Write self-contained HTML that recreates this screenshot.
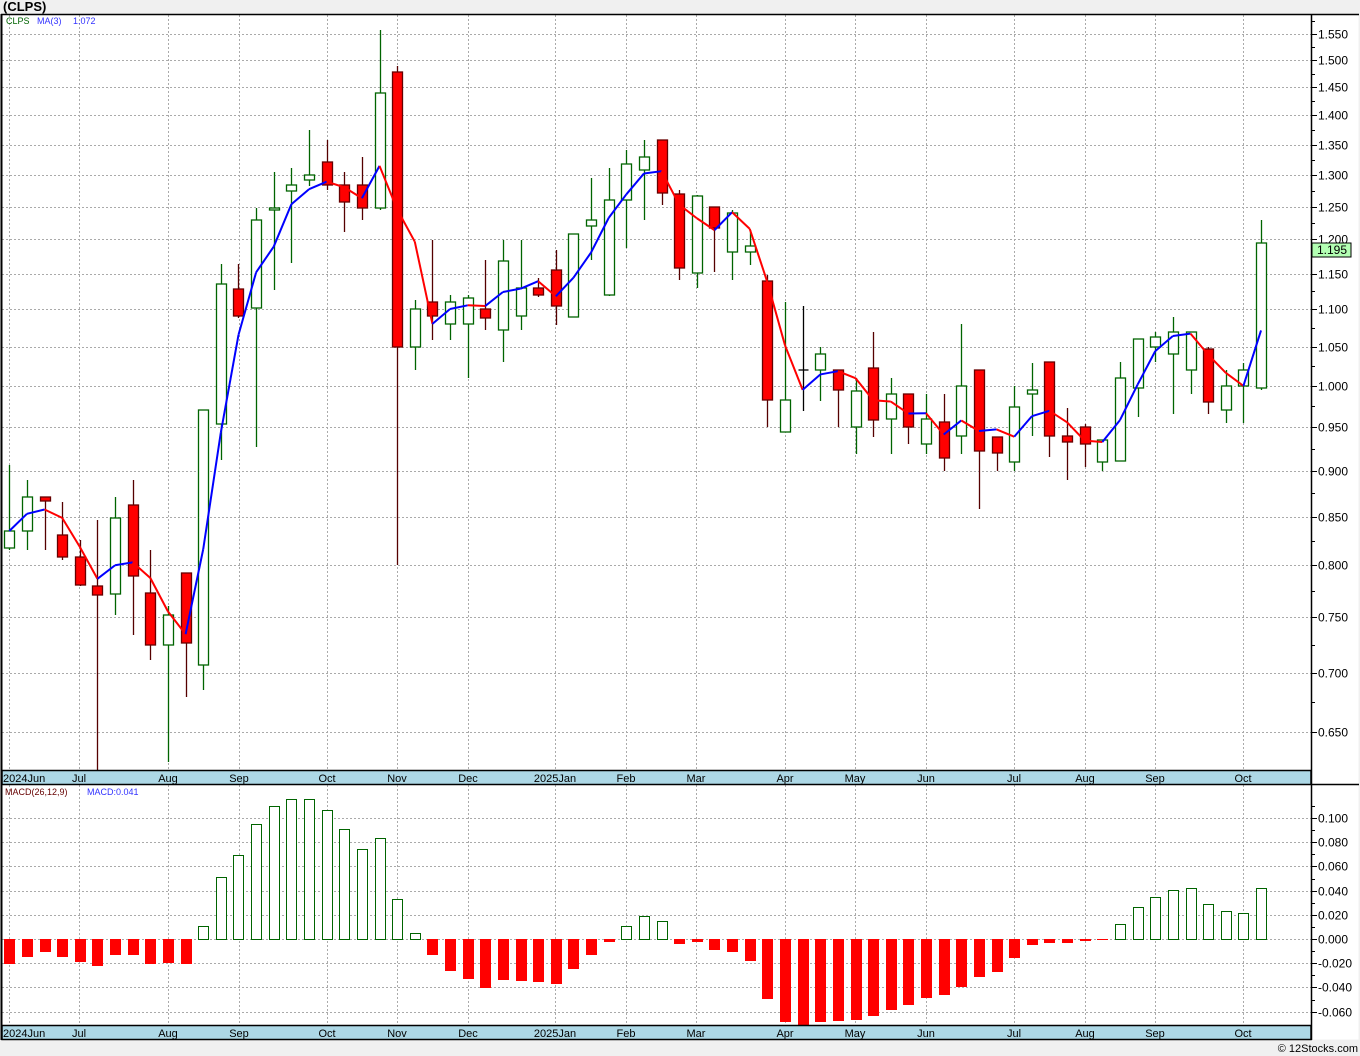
<!DOCTYPE html>
<html><head><meta charset="utf-8"><style>
html,body{margin:0;padding:0;background:#f0f0f0;width:1360px;height:1056px;overflow:hidden}
svg{position:absolute;left:0;top:0;font-family:"Liberation Sans","DejaVu Sans",sans-serif}
</style></head><body>
<svg id="s" width="1360" height="1056" xmlns="http://www.w3.org/2000/svg">
<text x="3" y="11" font-size="13" font-weight="bold" fill="#000">(CLPS)</text>
<rect x="1.5" y="14.5" width="1357" height="1025" fill="#fff" stroke="none"/>
<g id="grid"></g>
<g id="c"></g>
<g id="m"></g>
<line x1="1.5" y1="14" x2="1.5" y2="1040" stroke="#000" stroke-width="2"/>
<line x1="1" y1="14.5" x2="1359" y2="14.5" stroke="#000" stroke-width="1.5"/>
<line x1="1311.5" y1="14" x2="1311.5" y2="1040" stroke="#000" stroke-width="1.5"/>
<rect x="2" y="770.5" width="1309" height="14" fill="#add8e6" stroke="#000" stroke-width="1.5"/>
<rect x="2" y="1025.5" width="1309" height="14" fill="#add8e6" stroke="#000" stroke-width="1.5"/>
<line x1="1311" y1="784.5" x2="1359" y2="784.5" stroke="#000" stroke-width="1.5"/>
<g id="lab" font-size="11" fill="#000"></g>
<text x="6" y="24" font-size="9" fill="#006400">CLPS</text>
<text x="37" y="24" font-size="9" fill="#3333ff">MA(3)</text>
<text x="73" y="24" font-size="9" fill="#3333ff">1.072</text>
<text x="5" y="795" font-size="9" fill="#660000">MACD(26,12,9)</text>
<text x="87" y="795" font-size="9" fill="#3333ff">MACD:0.041</text>
<rect x="1312" y="243" width="39" height="14" fill="#b3ffb3" stroke="#000"/>
<text x="1317" y="254" font-size="12" fill="#000">1.195</text>
<text x="1358" y="1052" font-size="11" fill="#000" text-anchor="end">© 12Stocks.com</text>
</svg>
<script>
var NS="http://www.w3.org/2000/svg";
function el(p,t,a){var e=document.createElementNS(NS,t);for(var k in a)e.setAttribute(k,a[k]);p.appendChild(e);return e;}
var G=document.getElementById('grid'),C=document.getElementById('c'),M=document.getElementById('m'),L=document.getElementById('lab');
var months=[[9,"2024Jun"],[79,"Jul"],[168,"Aug"],[239,"Sep"],[327,"Oct"],[397,"Nov"],[468,"Dec"],[555,"2025Jan"],[626,"Feb"],[696,"Mar"],[785,"Apr"],[855,"May"],[926,"Jun"],[1014,"Jul"],[1085,"Aug"],[1155,"Sep"],[1243,"Oct"]];
months.forEach(function(m){
 el(G,'line',{x1:m[0]+.5,y1:15,x2:m[0]+.5,y2:770,stroke:'#aaa','stroke-dasharray':'2,2'});
 el(G,'line',{x1:m[0]+.5,y1:785,x2:m[0]+.5,y2:1025,stroke:'#aaa','stroke-dasharray':'2,2'});
 [782,1037].forEach(function(y){var t=el(L,'text',{x:m[0]<10?3:m[0],y:y,'text-anchor':m[0]<10?'start':'middle'});t.textContent=m[1];});
});
function py(p){return 386-804*Math.log(p);}
for(var p=0.65;p<1.56;p+=0.05){var y=Math.round(py(p))+.5;
 el(G,'line',{x1:2,y1:y,x2:1311,y2:y,stroke:'#aaa','stroke-dasharray':'2,2'});
 el(G,'line',{x1:1311,y1:y,x2:1317,y2:y,stroke:'#000'});
 var t=el(L,'text',{x:1318,y:y+4,'font-size':12});t.textContent=p.toFixed(3);
 var y2=Math.round(py(p+0.025))+.5;if(y2>15)el(G,'line',{x1:1311,y1:y2,x2:1315,y2:y2,stroke:'#000'});}
for(var v=-0.06;v<0.11;v+=0.02){var y=Math.round(939-1210*v)+.5;
 el(G,'line',{x1:2,y1:y,x2:1311,y2:y,stroke:'#aaa','stroke-dasharray':'2,2'});
 el(G,'line',{x1:1311,y1:y,x2:1317,y2:y,stroke:'#000'});
 var t=el(L,'text',{x:1318,y:y+4,'font-size':12});t.textContent=(Math.abs(v)<0.001?"0.000":v.toFixed(3));
 var y2=Math.round(939-1210*(v+0.01))+.5;el(G,'line',{x1:1311,y1:y2,x2:1315,y2:y2,stroke:'#000'});}
// [type,bodyTop,bodyBottom,wickTop,wickBottom]  g=green r=red d=doji
var K=[
['g',531,548,465,550],['g',497,531,480,550],['r',497,501,497,550],['r',535,557,502,560],['r',557,585,540,586],['r',586,595,520,770],
['g',518,594,497,615],['r',505,576,480,635],['r',593,645,550,660],['g',615,645,606,762],['r',573,643,573,697],['g',410,665,410,690],
['g',284,424,264,460],['r',289,316,264,318],['g',220,308,208,447],['g',208,210,172,290],['g',185,191,168,263],['g',175,180,130,186],
['r',162,185,140,190],['r',185,202,172,232],['r',185,208,157,220],['g',93,208,30,210],['r',72,347,66,565],['g',309,347,300,370],
['r',302,316,240,340],['g',302,324,295,340],['g',298,324,295,378],['r',309,318,260,330],['g',261,330,240,362],['g',288,316,240,330],
['r',288,295,278,297],['r',270,306,250,325],['g',234,317,234,317],['g',220,226,178,260],['g',200,295,168,296],['g',164,200,150,248],
['g',157,170,140,220],['r',140,193,140,205],['r',194,268,190,280],['g',196,273,195,288],['r',207,228,207,272],['g',213,252,210,280],
['g',246,252,230,265],['r',281,400,275,427],['g',400,432,302,432],['d',370,371,306,411],['g',354,370,347,401],['r',370,390,370,427],
['g',391,427,378,454],['r',368,420,332,437],['g',394,419,378,454],['r',394,427,394,444],['g',419,444,394,454],['r',422,458,394,471],
['g',386,436,324,454],['r',370,451,370,509],['r',437,453,437,471],['g',407,462,386,471],['g',390,394,363,436],['r',362,436,362,457],
['r',436,442,408,480],['r',427,444,424,467],['g',440,462,440,471],['g',378,461,362,461],['g',339,388,339,417],['g',337,347,332,362],
['g',332,354,317,414],['g',332,370,332,394],['r',349,402,347,414],['g',386,410,370,423],['g',370,386,363,423],['g',243,388,220,390]];
var X=function(i){return 9.3+17.63*i;};
var closes=[];
K.forEach(function(k,i){var x=Math.round(X(i))+.5;
 var wc=k[0]=='g'?'#006400':(k[0]=='r'?'#550000':'#000');
 el(C,'line',{x1:x,y1:k[3],x2:x,y2:k[4],stroke:wc,'stroke-width':1.3});
 if(k[0]=='d'){el(C,'line',{x1:x-5,y1:k[1],x2:x+5,y2:k[1],stroke:'#000','stroke-width':1.3});}
 else el(C,'rect',{x:x-5,y:k[1],width:10,height:Math.max(1,k[2]-k[1]),fill:k[0]=='g'?'#fff':'#ff0000',stroke:k[0]=='g'?'#006400':'#660000','stroke-width':1.3});
 var cy=k[0]=='r'?k[2]:k[1];closes.push(Math.exp((386-cy)/804));});
var prev=null;
closes.forEach(function(c,i){var s=0,n=0;for(var j=Math.max(0,i-2);j<=i;j++){s+=closes[j];n++;}
 var y=py(s/n),x=X(i);
 if(prev){el(C,'line',{x1:prev[0],y1:prev[1],x2:x,y2:y,stroke:y<prev[1]?'#0000ff':'#ff0000','stroke-width':2});}
 prev=[x,y];});
var MD=[964,957,952,957,962,966,955,955,964,963,964,926,877,855,824,806,799,799,810,829,849,838,899,933,955,971,979,988,980,981,982,984,969,955,942,926,916,921,944,942,950,952,961,999,1022,1025,1022,1021,1020,1016,1010,1005,998,995,987,977,972,958,945,943,943,941,939.5,924,907,897,890,888,904,911,913,888];
MD.forEach(function(v,i){var x=Math.round(X(i))-5;
 if(v<939) el(M,'rect',{x:x+.5,y:v+.5,width:10,height:939-v,fill:'#fff',stroke:'#006400'});
 else el(M,'rect',{x:x,y:939,width:11,height:Math.max(1,v-939),fill:'#ff0000'});});
</script>
</body></html>
